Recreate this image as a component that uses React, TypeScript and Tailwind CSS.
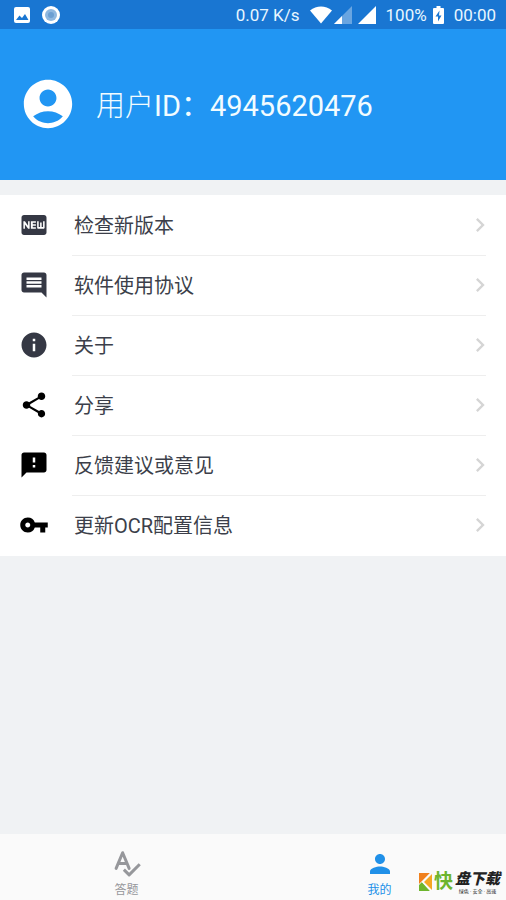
import React, { useState } from 'react';
import type { IconType } from 'react-icons';
import {
  MdAccountCircle,
  MdChevronRight,
  MdComment,
  MdFeedback,
  MdFiberNew,
  MdInfo,
  MdPerson,
  MdShare,
  MdVpnKey,
} from 'react-icons/md';

interface MenuItem {
  label: string;
  icon: IconType;
  iconColor: string;
}

const menuItems: MenuItem[] = [
  { label: '检查新版本', icon: MdFiberNew, iconColor: 'text-[#353844]' },
  { label: '软件使用协议', icon: MdComment, iconColor: 'text-[#353844]' },
  { label: '关于', icon: MdInfo, iconColor: 'text-[#353844]' },
  { label: '分享', icon: MdShare, iconColor: 'text-black' },
  { label: '反馈建议或意见', icon: MdFeedback, iconColor: 'text-black' },
  { label: '更新OCR配置信息', icon: MdVpnKey, iconColor: 'text-black' },
];

function SpellcheckIcon({ className }: { className?: string }) {
  return (
    <svg className={className} viewBox="0 0 24 24" fill="none" stroke="currentColor" strokeWidth="2.4" strokeLinejoin="round" aria-hidden="true">
      <path d="M3.300 15.500L8.500 3l5.200 12.500M5.300 11.500h6.400" strokeLinecap="round" />
      <path d="M9.500 16.500l4.200 4.200 8.500-8.500" />
    </svg>
  );
}

const tabs = [
  { id: 'answer', label: '答题', icon: SpellcheckIcon },
  { id: 'mine', label: '我的', icon: MdPerson },
];

function StatusBar() {
  return (
    <div className="flex h-[29px] items-center bg-[#1976d2] pt-px pr-2.5 pl-3.5 text-[17px] leading-5 text-[#e8f6ff]">
      <svg className="h-4 w-4" viewBox="0 0 16 16" aria-hidden="true">
        <rect width="16" height="16" rx="2" fill="#fff" />
        <path d="M2 13l3.5-4.5L8 11l3-4 3.5 6z" fill="#1976d2" />
      </svg>
      <svg className="ml-3 h-[18px] w-[18px]" viewBox="0 0 18 18" aria-hidden="true">
        <circle cx="9" cy="9" r="9" fill="#fff" />
        <circle cx="9" cy="9" r="6" fill="#8fb8e0" />
        <circle cx="9" cy="9" r="3" fill="#6c9fd2" />
      </svg>
      <span className="ml-auto">0.07 K/s</span>
      <svg className="ml-2.5 h-[18px] w-[22px]" viewBox="0 0 22 18" fill="#fff" aria-hidden="true">
        <path d="M0 4.5C6.5-.8 15.500-.8 22 4.500L11 17.500z" />
      </svg>
      <svg className="ml-0.5 h-[18px] w-[18px]" viewBox="0 0 18 18" fill="#fff" aria-hidden="true">
        <path d="M18 0v18H0z" opacity=".35" />
        <path d="M8 10v8H0z" />
      </svg>
      <svg className="ml-1.5 h-[18px] w-[18px]" viewBox="0 0 18 18" fill="#fff" aria-hidden="true">
        <path d="M18 0v18H0z" />
      </svg>
      <span className="ml-2.5">100%</span>
      <svg className="ml-1.5 h-[18px] w-[11px]" viewBox="0 0 11 18" aria-hidden="true">
        <path d="M3.500 0h4v2H10a1 1 0 0 1 1 1v14a1 1 0 0 1-1 1H1a1 1 0 0 1-1-1V3a1 1 0 0 1 1-1h2.500z" fill="#fff" />
        <path d="M6.500 4.500L2.500 10.500h2.500v5l3.500-6h-2.500z" fill="#1976d2" />
      </svg>
      <span className="ml-2.5">00:00</span>
    </div>
  );
}

function Watermark() {
  return (
    <div className="pointer-events-none absolute right-1.5 bottom-1.5 flex items-center text-[#222]">
      <svg className="h-[18px] w-[13px]" viewBox="0 0 13 18" aria-hidden="true">
        <path d="M0 0h11L0 11z" fill="#f0801d" />
        <path d="M0 12l3-3 8 9H0z" fill="#6db52d" />
        <path d="M13 1v16L5 9z" fill="#f5a623" />
        <path d="M12 0L3.500 9l8.500 9" fill="none" stroke="#fafafa" strokeWidth="1.2" />
      </svg>
      <span className="ml-0.5 text-[19px] leading-5 font-bold text-[#6db52d]">快</span>
      <div className="ml-0.5 flex flex-col items-center">
        <span className="text-[15px] leading-[18px] font-black italic">盘下载</span>
        <span className="text-[5px] leading-[6px]">绿色 · 安全 · 高速</span>
      </div>
    </div>
  );
}

export default function App() {
  const [activeTab, setActiveTab] = useState('mine');

  return (
    <div className="relative flex min-h-screen flex-col bg-[#f0f2f4] font-['Roboto','Noto_Sans_CJK_SC',sans-serif]">
      <StatusBar />

      <header className="flex h-[151px] items-center gap-[19px] bg-[#2196f3] px-[19px] pb-0.5 text-[#f2fcff]">
        <MdAccountCircle className="h-[58px] w-[58px] shrink-0 text-white" />
        <h1 className="pt-1 text-[29px] leading-10 font-normal">
          <span className="font-light">用户</span>ID：4945620476
        </h1>
      </header>

      <main className="flex-1 pt-[15px]">
        <ul className="bg-white pt-px">
          {menuItems.map((item, index) => (
            <li key={item.label}>
              <button type="button" className="flex h-[60px] w-full items-center pr-5 pl-[19px] text-left">
                <item.icon className={`mb-0.5 h-[30px] w-[30px] shrink-0 ${item.iconColor}`} />
                <span
                  className={`ml-[23px] flex h-full flex-1 items-center justify-between border-b pl-0.5 text-[20px] leading-7 text-[#3c3f4a] ${
                    index < menuItems.length - 1 ? 'border-[#eeeeee]' : 'border-transparent'
                  }`}
                >
                  {item.label}
                  <MdChevronRight className="-mr-2 mb-px h-7 w-7 text-[#d5d5d5]" />
                </span>
              </button>
            </li>
          ))}
        </ul>
      </main>

      <nav className="flex h-[66px] bg-[#fafafa]">
        {tabs.map((tab) => (
          <button
            key={tab.id}
            type="button"
            onClick={() => setActiveTab(tab.id)}
            className={`flex flex-1 flex-col items-center justify-end gap-[3px] pb-0.5 text-xs ${
              activeTab === tab.id ? 'text-[#2090e8]' : 'text-[#96979b]'
            }`}
          >
            <tab.icon className="h-[30px] w-[30px]" />
            {tab.label}
          </button>
        ))}
      </nav>

      <Watermark />
    </div>
  );
}
